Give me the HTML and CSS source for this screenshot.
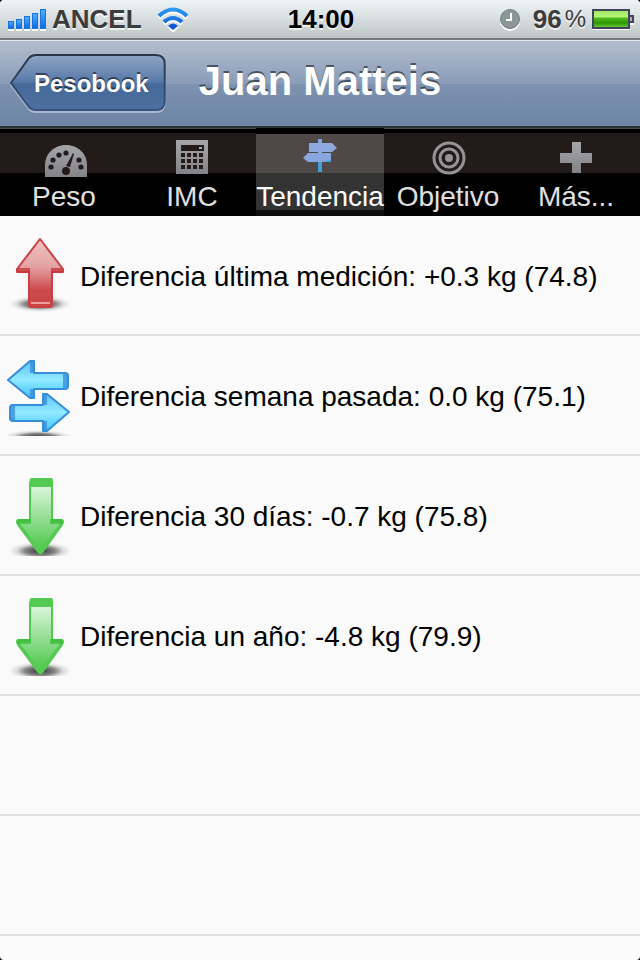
FILE: index.html
```html
<!DOCTYPE html>
<html lang="es">
<head>
    <meta charset="UTF-8">
    <meta name="viewport" content="width=device-width, initial-scale=1.0">
    <title>Pesobook - Juan Matteis</title>
    <link rel="stylesheet" href="styles.css">
</head>
<body>
    <!-- Shared gradients and repeated icons -->
    <svg class="defs" width="0" height="0" aria-hidden="true">
        <defs>
            <linearGradient id="signal" x1="0" y1="0" x2="0" y2="1">
                <stop offset="0" stop-color="#4db4fb"/>
                <stop offset="1" stop-color="#0a66ee"/>
            </linearGradient>
            <linearGradient id="wifi" gradientUnits="userSpaceOnUse" x1="0" y1="0" x2="0" y2="24">
                <stop offset="0" stop-color="#2f9bf2"/>
                <stop offset="1" stop-color="#0850d4"/>
            </linearGradient>
            <linearGradient id="metal" x1="0" y1="0" x2="0" y2="1">
                <stop offset="0" stop-color="#a5a6aa"/>
                <stop offset="1" stop-color="#828287"/>
            </linearGradient>
            <linearGradient id="red" x1="0" y1="0" x2="0" y2="1">
                <stop offset="0" stop-color="#f0c4c5"/>
                <stop offset="0.4" stop-color="#e4a3a5"/>
                <stop offset="0.75" stop-color="#cc4a4d"/>
                <stop offset="1" stop-color="#cb4447"/>
            </linearGradient>
            <linearGradient id="green" x1="0" y1="0" x2="0" y2="1">
                <stop offset="0" stop-color="#d9f5d9"/>
                <stop offset="0.5" stop-color="#93de92"/>
                <stop offset="1" stop-color="#4dc84b"/>
            </linearGradient>
            <linearGradient id="blue" x1="0" y1="0" x2="0" y2="1">
                <stop offset="0" stop-color="#5fc0f5"/>
                <stop offset="0.5" stop-color="#93eaff"/>
                <stop offset="1" stop-color="#3fc4fb"/>
            </linearGradient>
            <radialGradient id="shadow">
                <stop offset="0" stop-color="#000" stop-opacity="0.8"/>
                <stop offset="0.5" stop-color="#000" stop-opacity="0.45"/>
                <stop offset="0.75" stop-color="#000" stop-opacity="0.12"/>
                <stop offset="1" stop-color="#000" stop-opacity="0"/>
            </radialGradient>
            <symbol id="arrow-down" viewBox="0 0 80 80">
                <ellipse cx="40" cy="75" rx="31" ry="9" fill="url(#shadow)"/>
                <path d="M30 3 Q30 2 32 2 H51 Q53 2 53 4 V43 H62 Q65 44 63 49 L43 77 Q40 80 37 76 L17 49 Q15 44 18 43 H29 V7 Z" fill="#55ca53"/>
                <path d="M31 11 H51 V46 H61 L40 74 L19 46 H31 Z" fill="url(#green)"/>
                <path d="M29 43 H18 Q15 44 17 48 H31 V43 M52 43 H62 Q65 44 63 48 H50 V43" fill="#3abc38" opacity="0.7"/>
            </symbol>
        </defs>
    </svg>

    <div class="status-bar">
        <div class="carrier">
            <svg width="40" height="24" viewBox="0 0 40 24" aria-hidden="true">
                <g fill="#fff">
                    <path d="M0 22h6v2H0zM8 22h6v2H8zM16 22h6v2h-6zM24 22h6v2h-6zM32 22h6v2h-6z"/>
                </g>
                <g fill="url(#signal)" stroke="#1673d9" stroke-width="1">
                    <rect x="0.5" y="14.5" width="5" height="7"/>
                    <rect x="8.5" y="12.5" width="5" height="9"/>
                    <rect x="16.5" y="9.5" width="5" height="12"/>
                    <rect x="24.5" y="6.5" width="5" height="15"/>
                    <rect x="32.5" y="2.5" width="5" height="19"/>
                </g>
            </svg>
            <span class="carrier-name">ANCEL</span>
            <svg class="wifi" width="34" height="26" viewBox="0 -2 34 26" aria-hidden="true">
                <g fill="none" stroke="#fff" stroke-width="4" transform="translate(0 1)">
                    <path d="M3 9 Q17 -4 31 9"/>
                    <path d="M8 15 Q17 7 26 15"/>
                </g>
                <path d="M17 25 L11 19 Q17 14 23 19 Z" fill="#fff"/>
                <g fill="none" stroke="url(#wifi)" stroke-width="4">
                    <path d="M3 8 Q17 -5 31 8"/>
                    <path d="M8 14 Q17 6 26 14"/>
                </g>
                <path d="M17 22 L12 18 Q17 13 22 18 Z" fill="#0c58d8"/>
            </svg>
        </div>
        <time class="clock">14:00</time>
        <div class="power">
            <svg width="22" height="24" viewBox="0 -1 22 24" aria-hidden="true">
                <circle cx="10" cy="13" r="10" fill="#fff"/>
                <circle cx="10" cy="11" r="9.5" fill="#8b9797" stroke="#737e7f"/>
                <path d="M11 5 V12 H6" fill="none" stroke="#fff" stroke-width="2"/>
            </svg>
            <span class="level">96</span>
            <span class="percent">%</span>
            <svg width="42" height="24" viewBox="0 -2 42 24" aria-hidden="true">
                <defs>
                    <linearGradient id="charge" x1="0" y1="0" x2="0" y2="1">
                        <stop offset="0" stop-color="#a0e85f"/>
                        <stop offset="0.35" stop-color="#b6f57e"/>
                        <stop offset="0.45" stop-color="#52bd1c"/>
                        <stop offset="0.75" stop-color="#2c9404"/>
                        <stop offset="1" stop-color="#63cb2a"/>
                    </linearGradient>
                </defs>
                <path d="M0 19 H38 V21 H0 Z M37 14 h5 v2 h-5 z" fill="#fff"/>
                <rect x="1" y="1" width="36" height="18" fill="#dcebe0" stroke="#41435f" stroke-width="2"/>
                <path d="M38 7 H41 V13 H38" fill="#aab0ba" stroke="#41435f" stroke-width="2"/>
                <rect x="2" y="2" width="34" height="16" fill="url(#charge)"/>
            </svg>
        </div>
    </div>

    <header class="nav-bar">
        <a class="back" href="#">
            <svg class="back-shape" viewBox="0 0 157 60" preserveAspectRatio="none" aria-hidden="true">
                <defs>
                    <linearGradient id="back-fill" x1="0" y1="0" x2="0" y2="1">
                        <stop offset="0" stop-color="#8ea5c4"/>
                        <stop offset="0.5" stop-color="#5678a8"/>
                        <stop offset="0.51" stop-color="#456999"/>
                        <stop offset="1" stop-color="#4d70a1"/>
                    </linearGradient>
                    <linearGradient id="back-edge" x1="0" y1="0" x2="0" y2="1">
                        <stop offset="0" stop-color="#2b3546"/>
                        <stop offset="1" stop-color="#36527e"/>
                    </linearGradient>
                </defs>
                <path d="M26 3 H146 Q155 3 155 12 V49 Q155 58 146 58 H26 Q22 58 19 55 L1 31 L19 6 Q22 3 26 3 Z" fill="none" stroke="#a9b8cd" stroke-width="2"/>
                <path d="M26 1 H146 Q155 1 155 10 V47 Q155 56 146 56 H26 Q22 56 19 53 L1 29 L19 4 Q22 1 26 1 Z" fill="url(#back-fill)" stroke="url(#back-edge)" stroke-width="2"/>
            </svg>
            <span class="back-label">Pesobook</span>
        </a>
        <h1 class="title">Juan Matteis</h1>
    </header>

    <nav class="tabs">
        <a class="tab" href="#">
            <svg class="tab-icon" viewBox="-2 0 48 44" aria-hidden="true">
                <path d="M3 43 V31 C3 20 12 11 24 11 C36 11 45 20 45 31 V43 Z" fill="url(#metal)"/>
                <g fill="#231b1a">
                    <circle cx="9" cy="33" r="2.6"/>
                    <circle cx="11" cy="26" r="2.6"/>
                    <circle cx="17" cy="21" r="2.6"/>
                    <circle cx="24" cy="19" r="2.6"/>
                    <circle cx="37" cy="26" r="2.6"/>
                    <circle cx="39" cy="33" r="2.6"/>
                    <circle cx="24" cy="37" r="4"/>
                    <path d="M24 32 L31 19 L32 20 L28 33 Z"/>
                </g>
            </svg>
            <span>Peso</span>
        </a>
        <a class="tab" href="#">
            <svg class="tab-icon" viewBox="0 0 48 44" aria-hidden="true">
                <path d="M8 6 H40 V40 H8 Z" fill="url(#metal)"/>
                <g fill="#231b1a">
                    <path d="M13 11 H36 V17 H13 Z"/>
                    <path d="M13 19h4v4h-4zM19 19h4v4h-4zM25 19h4v4h-4zM31 19h4v4h-4z"/>
                    <path d="M13 25h4v4h-4zM19 25h4v4h-4zM25 25h4v4h-4zM31 25h4v4h-4z"/>
                    <path d="M13 31h4v4h-4zM19 31h4v4h-4zM25 31h4v4h-4zM31 31h4v4h-4z"/>
                </g>
                <rect x="31" y="13" width="3" height="2" fill="#aaa"/>
            </svg>
            <span>IMC</span>
        </a>
        <a class="tab selected" href="#" aria-current="page">
            <svg class="tab-icon" viewBox="0 0 48 44" aria-hidden="true">
                <path d="M22 5 H26 V38 H22 Z" fill="#86a5dc"/>
                <path d="M22 27 H26 V38 H22 Z" fill="#4a9ddc"/>
                <path d="M13 9 H36 L41 14 L36 18 H13 Z" fill="#8ea9df"/>
                <path d="M35 19 H12 L7 24 L12 28 H35 Z" fill="#87a6de"/>
                <path d="M26 28 L35 26 V28 Z" fill="#4a9ddc"/>
            </svg>
            <span>Tendencia</span>
        </a>
        <a class="tab" href="#">
            <svg class="tab-icon" viewBox="0 0 48 44" aria-hidden="true">
                <g fill="none" stroke="#939498" stroke-width="3">
                    <circle cx="25" cy="24" r="15"/>
                    <circle cx="25" cy="24" r="9"/>
                </g>
                <circle cx="25" cy="24" r="4" fill="#939498"/>
            </svg>
            <span>Objetivo</span>
        </a>
        <a class="tab" href="#">
            <svg class="tab-icon" viewBox="0 0 48 44" aria-hidden="true">
                <path d="M20 8 H29 V19 H40 V29 H29 V39 H20 V29 H8 V19 H20 Z" fill="url(#metal)"/>
            </svg>
            <span>Más...</span>
        </a>
    </nav>

    <main>
        <ul class="list">
            <li class="row">
                <svg class="row-icon" viewBox="0 0 80 80" aria-hidden="true">
                    <ellipse cx="40" cy="68" rx="31" ry="8" fill="url(#shadow)"/>
                    <path d="M40 3 L63 33 V36 H52 V69 Q52 71 50 71 H31 Q29 71 29 69 V36 H17 V33 Z" fill="url(#red)" stroke="#cb4043" stroke-width="2" stroke-linejoin="round"/>
                    <path d="M17 32 H30 V37 H17 Z M51 32 H63 V37 H51 Z" fill="#c33639" opacity="0.75"/>
                    <path d="M31 67 H50" stroke="#e8a0a1" stroke-width="2"/>
                </svg>
                <span class="row-text">Diferencia última medición: +0.3 kg (74.8)</span>
            </li>
            <li class="row">
                <svg class="row-icon" viewBox="0 0 80 80" aria-hidden="true">
                    <ellipse cx="38" cy="81" rx="34" ry="7" fill="url(#shadow)"/>
                    <g stroke="#358fd8" stroke-width="2" stroke-linejoin="round">
                        <path d="M8 24 L30 5 H34 V17 H65 Q68 17 68 20 V30 Q68 33 65 33 H34 V42 H30 Z" fill="url(#blue)"/>
                        <path d="M69 56 L47 38 H43 V49 H13 Q10 49 10 52 V62 Q10 65 13 65 H43 V75 H47 Z" fill="url(#blue)"/>
                    </g>
                    <path d="M30 5 H34 V17 H30 Z M30 33 H34 V42 H30 Z M63 17 H67 V32 H63 Z M43 38 H47 V49 H43 Z M43 65 H47 V75 H43 Z M10 50 H15 V64 H10 Z" fill="#398fdc" opacity="0.8"/>
                </svg>
                <span class="row-text">Diferencia semana pasada: 0.0 kg (75.1)</span>
            </li>
            <li class="row">
                <svg class="row-icon" aria-hidden="true"><use href="#arrow-down"/></svg>
                <span class="row-text">Diferencia 30 días: -0.7 kg (75.8)</span>
            </li>
            <li class="row">
                <svg class="row-icon" aria-hidden="true"><use href="#arrow-down"/></svg>
                <span class="row-text">Diferencia un año: -4.8 kg (79.9)</span>
            </li>
            <li class="row"></li>
            <li class="row"></li>
        </ul>
    </main>
</body>
</html>
```

FILE: styles.css
```css
* {
    box-sizing: border-box;
}

html {
    background-color: black;
}

body {
    margin: 0;
    min-height: 100vh;
    background-color: #fafafa;
    border-radius: 4px;
    color: black;
    font-family: "Liberation Sans", Arial, sans-serif;
    font-size: 28px;
}

a {
    color: inherit;
    text-decoration: none;
}

svg {
    display: block;
    flex-shrink: 0;
}

.defs {
    position: absolute;
}

/* Status bar */
.status-bar {
    display: grid;
    grid-template-columns: 1fr auto 1fr;
    align-items: center;
    height: 40px;
    padding: 0 6px 0 8px;
    background: linear-gradient(to bottom, #edf4f7, #d8dedf 50%, #bdc4c4);
    border-bottom: 2px solid #727b7c;
    border-radius: 4px 4px 0 0;
    font-size: 26px;
    font-weight: bold;
    text-shadow: 0 2px 0 rgba(255, 255, 255, 0.7);
}

.carrier, .power {
    display: flex;
    align-items: center;
    color: #3c3c3c;
}

.carrier-name {
    margin-left: 4px;
}

.wifi {
    margin-left: 14px;
}

.power {
    justify-content: flex-end;
}

.level {
    margin-left: 11px;
}

.percent {
    margin: 0 6px 0 3px;
    font-size: 24px;
    font-weight: normal;
}

/* Navigation bar */
.nav-bar {
    display: grid;
    grid-template-columns: 1fr auto 1fr;
    align-items: center;
    height: 88px;
    padding: 0 10px;
    background: linear-gradient(to bottom, #b3bfcf, #8a9cb8 50%, #7d92b1 51%, #6d84a4);
    border-top: 1px solid #e4e8ed;
    border-bottom: 2px solid #2d3033;
    color: white;
    text-shadow: 0 -2px 0 rgba(0, 0, 0, 0.5);
}

.back {
    position: relative;
    justify-self: start;
    padding: 0 18px 0 24px;
    font-size: 24px;
    font-weight: bold;
    line-height: 60px;
}

.back-shape {
    position: absolute;
    inset: 0;
    width: 100%;
    height: 100%;
}

.back-label {
    position: relative;
}

.title {
    margin: 0;
    padding-bottom: 6px;
    font-size: 40px;
    line-height: 48px;
}

/* Tabs */
.tabs {
    display: grid;
    grid-template-columns: repeat(5, minmax(0, 1fr));
    height: 88px;
    background: linear-gradient(to bottom, #4a4a4a 1px, black 1px, black 5px, #231b1a 5px, #231b1a 45px, black 45px);
}

.tab {
    display: flex;
    flex-direction: column;
    align-items: center;
    padding-top: 6px;
    color: #e0e0e0;
    line-height: 38px;
    white-space: nowrap;
}

.tab.selected {
    background: linear-gradient(to bottom, black 6px, rgba(255, 255, 255, 0.2) 6px, rgba(255, 255, 255, 0.2) 82px, rgba(255, 255, 255, 0.05) 82px);
    color: white;
}

.tab-icon {
    width: 48px;
    height: 44px;
}

/* List */
.list {
    margin: 0;
    padding: 0;
    list-style: none;
}

.row {
    display: flex;
    align-items: center;
    height: 120px;
    padding-top: 2px;
    border-bottom: 2px solid #e0e0e0;
}

.row-icon {
    width: 80px;
    height: 80px;
}

.row-text {
    padding-top: 2px;
}
```
